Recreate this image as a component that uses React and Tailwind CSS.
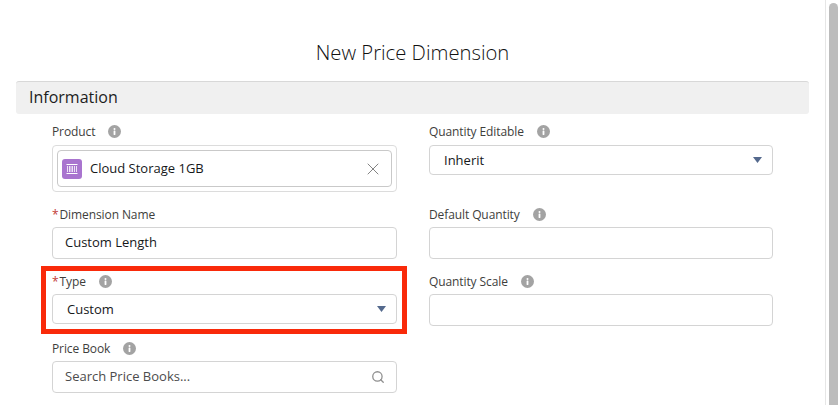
import { Search, X } from "lucide-react";

function InfoDot() {
  return (
    <span className="ml-[13px] flex h-[13px] w-[13px] items-center justify-center rounded-full bg-[#a3a3a3]">
      <svg viewBox="0 0 13 13" className="h-[13px] w-[13px]" fill="#fff">
        <circle cx="6.5" cy="3.9" r="1" />
        <rect x="5.6" y="5.6" width="1.8" height="4.4" rx="0.4" />
      </svg>
    </span>
  );
}

function Label({ children, required, info }) {
  return (
    <div className="flex h-[13px] items-center text-[12px] leading-[13px] tracking-[-0.1px] text-[#3e3e3c]">
      {required && <span className="mr-px text-[#c23934]">*</span>}
      <span>{children}</span>
      {info && <InfoDot />}
    </div>
  );
}

function Caret() {
  return (
    <svg viewBox="0 0 9 6" className="h-[6px] w-[9px]" fill="#54698d">
      <path d="M0 0h9L4.5 6z" />
    </svg>
  );
}

function TextInput({ value, muted, search }) {
  return (
    <div className="mt-[6px] flex h-[32px] items-center justify-between rounded-[4px] border border-[#d4d4d4] bg-white pl-[12px] pr-[11px] text-[13px] text-[#16181a]">
      <span className={muted ? "text-[#4c4c4c]" : ""}>{value}</span>
      {search && <Search size={14} strokeWidth={2.2} className="text-[#8f8f8f]" />}
    </div>
  );
}

function SelectBox({ value }) {
  return (
    <div className="flex h-[30px] items-center justify-between rounded-[4px] border border-[#d4d4d4] bg-white pl-[14px] pr-[10px] text-[13px] text-[#16181a]">
      <span className="pt-px">{value}</span>
      <Caret />
    </div>
  );
}

function ProductIcon() {
  return (
    <span className="flex h-[20px] w-[20px] items-center justify-center rounded-[3px] bg-[#a974cf]">
      <svg viewBox="0 0 14 14" className="h-[14px] w-[14px]" stroke="#fff" fill="none">
        <path d="M1.5 2.5h11M1.5 11.5h11" strokeWidth="1" />
        <path d="M2.5 4v6M4.5 4v6M6 4v6M7.5 4v6M9.5 4v6M11.5 4v6" strokeWidth="0.8" />
      </svg>
    </span>
  );
}

export default function App() {
  return (
    <div className="relative flex h-[405px] w-[840px] overflow-hidden bg-white font-['Open_Sans','Noto_Sans',sans-serif]">
      <div className="w-[825px] shrink-0 pl-[16px] pr-[16px]">
        <h1 className="pt-[38px] text-center text-[20.25px] font-light leading-[28px] text-[#111]">
          New Price Dimension
        </h1>
        <div className="mt-[15px] flex h-[33px] items-center rounded-[3px] border-t border-[#d8d8d8] bg-[#f0f0f0] pb-[3px] pl-[13px] text-[16px] text-[#1d1d1d]">
          Information
        </div>
        <div className="grid grid-cols-[345px_344px] gap-x-[32px] pl-[36px] pt-[11px]">
          <div>
            <Label info>Product</Label>
            <div className="mt-[7px] h-[47px] rounded-[4px] border border-[#dcdcdc] p-[4px]">
              <div className="flex h-[37px] items-center justify-between rounded-[4px] border border-[#c9c9c9] pl-[4px] pr-[8px]">
                <div className="flex items-center gap-[8px] text-[13px] text-[#16181a]">
                  <ProductIcon />
                  <span>Cloud Storage 1GB</span>
                </div>
                <X size={20} strokeWidth={1.1} className="text-[#777]" />
              </div>
            </div>
            <div className="mt-[16px]">
              <Label required>Dimension Name</Label>
              <TextInput value="Custom Length" />
            </div>
            <div className="mt-[16px]">
              <Label required info>Type</Label>
              <div className="mt-[6px]">
                <SelectBox value="Custom" />
              </div>
            </div>
            <div className="mt-[18px]">
              <Label info>Price Book</Label>
              <TextInput value="Search Price Books..." muted search />
            </div>
          </div>
          <div>
            <Label info>Quantity Editable</Label>
            <div className="mt-[7px]">
              <SelectBox value="Inherit" />
            </div>
            <div className="mt-[33px]">
              <Label info>Default Quantity</Label>
              <TextInput value="" />
            </div>
            <div className="mt-[16px]">
              <Label info>Quantity Scale</Label>
              <TextInput value="" />
            </div>
          </div>
        </div>
      </div>
      <div className="flex-1 border-l border-[#e6e6e6] bg-white pl-[3px] pr-[2px] pt-[3px]">
        <div className="h-full w-[9px] rounded-t-[5px] bg-[#bcbcbc]" />
      </div>
      <div className="absolute left-[41px] top-[266px] h-[68px] w-[366px] border-[5px] border-[#f92a0a]" />
    </div>
  );
}
